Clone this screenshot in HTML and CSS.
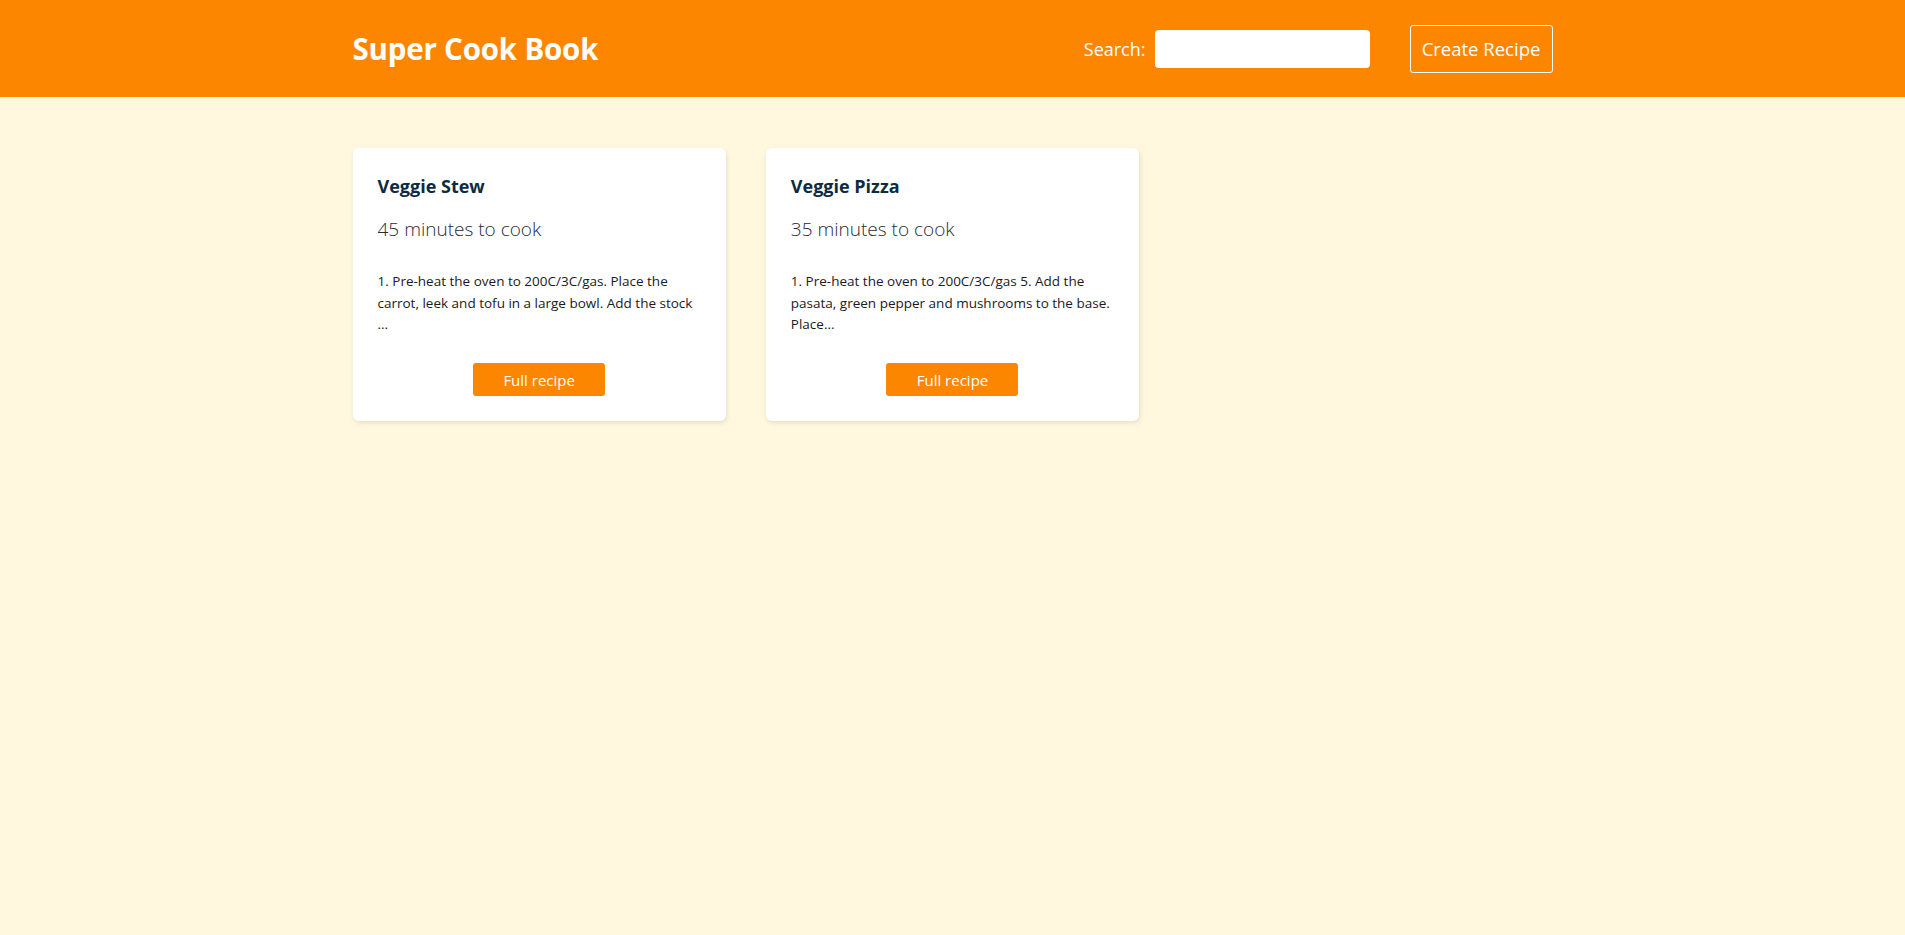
FILE: index.html
```html
<!DOCTYPE html>
<html lang="en">
<head>
<meta charset="utf-8">
<title>Super Cook Book</title>
<link rel="stylesheet" href="styles.css">
</head>
<body>
<header class="topbar">
  <div class="topbar-inner">
    <h1 class="brand">Super Cook Book</h1>
    <div class="actions">
      <label class="search">
        <span class="search-label">Search:</span>
        <input class="search-input" type="text">
      </label>
      <button class="create-btn" type="button">Create Recipe</button>
    </div>
  </div>
</header>
<main class="content">
  <div class="grid">
    <article class="card">
      <h3 class="card-title">Veggie Stew</h3>
      <p class="card-time">45 minutes to cook</p>
      <p class="card-desc">1. Pre-heat the oven to 200C/3C/gas. Place the carrot, leek and tofu in a large bowl. Add the stock ...</p>
      <div class="card-foot"><button class="full-btn" type="button">Full recipe</button></div>
    </article>
    <article class="card">
      <h3 class="card-title">Veggie Pizza</h3>
      <p class="card-time">35 minutes to cook</p>
      <p class="card-desc">1. Pre-heat the oven to 200C/3C/gas 5. Add the pasata, green pepper and mushrooms to the base. Place...</p>
      <div class="card-foot"><button class="full-btn" type="button">Full recipe</button></div>
    </article>
  </div>
</main>
</body>
</html>
```

FILE: styles.css
```css
* { box-sizing: border-box; }
html, body { margin: 0; padding: 0; }
body {
  background: #fff8df;
  font-family: "Open Sans", "Noto Sans", sans-serif;
  min-height: 100vh;
}
.topbar {
  background: #fd8600;
  height: 97px;
}
.topbar-inner {
  max-width: 1200px;
  margin: 0 auto;
  height: 100%;
  display: flex;
  align-items: center;
  justify-content: space-between;
}
.brand {
  margin: 0;
  color: #fff;
  font-size: 29.5px;
  font-weight: 700;
  letter-spacing: -0.2px;
}
.actions {
  display: flex;
  align-items: center;
  gap: 40px;
}
.search {
  display: flex;
  align-items: center;
  gap: 9px;
}
.search-label {
  color: #fff;
  font-size: 18px;
}
.search-input {
  width: 215px;
  height: 38px;
  border: none;
  border-radius: 4px;
  background: #fff;
  outline: none;
}
.create-btn {
  height: 48px;
  width: 143px;
  background: transparent;
  color: #fff;
  border: 1px solid #fff;
  border-radius: 3px;
  font-family: inherit;
  font-size: 18.5px;
  padding: 0;
}
.content {
  max-width: 1200px;
  margin: 51px auto 0;
}
.grid {
  display: grid;
  grid-template-columns: repeat(3, 1fr);
  gap: 40px;
}
.card {
  background: #fff;
  border-radius: 6px;
  box-shadow: 1px 2px 5px rgba(0, 0, 0, 0.1);
  padding: 25px 25px 25px;
}
.card-title {
  margin: 0;
  font-size: 18px;
  font-weight: 700;
  color: #0d2b40;
  line-height: 26px;
}
.card-time {
  margin: 16px 0 0;
  font-size: 19px;
  font-weight: 300;
  color: #2a2a38;
  line-height: 28px;
}
.card-desc {
  margin: 28px 0 0;
  font-size: 13.5px;
  line-height: 21.7px;
  color: #1a1a24;
}
.card-foot {
  display: flex;
  justify-content: center;
  margin-top: 27px;
}
.full-btn {
  width: 132px;
  height: 33px;
  background: #fd8600;
  color: #fff;
  border: none;
  border-radius: 3px;
  font-family: inherit;
  font-size: 15px;
  padding: 0;
}
```
